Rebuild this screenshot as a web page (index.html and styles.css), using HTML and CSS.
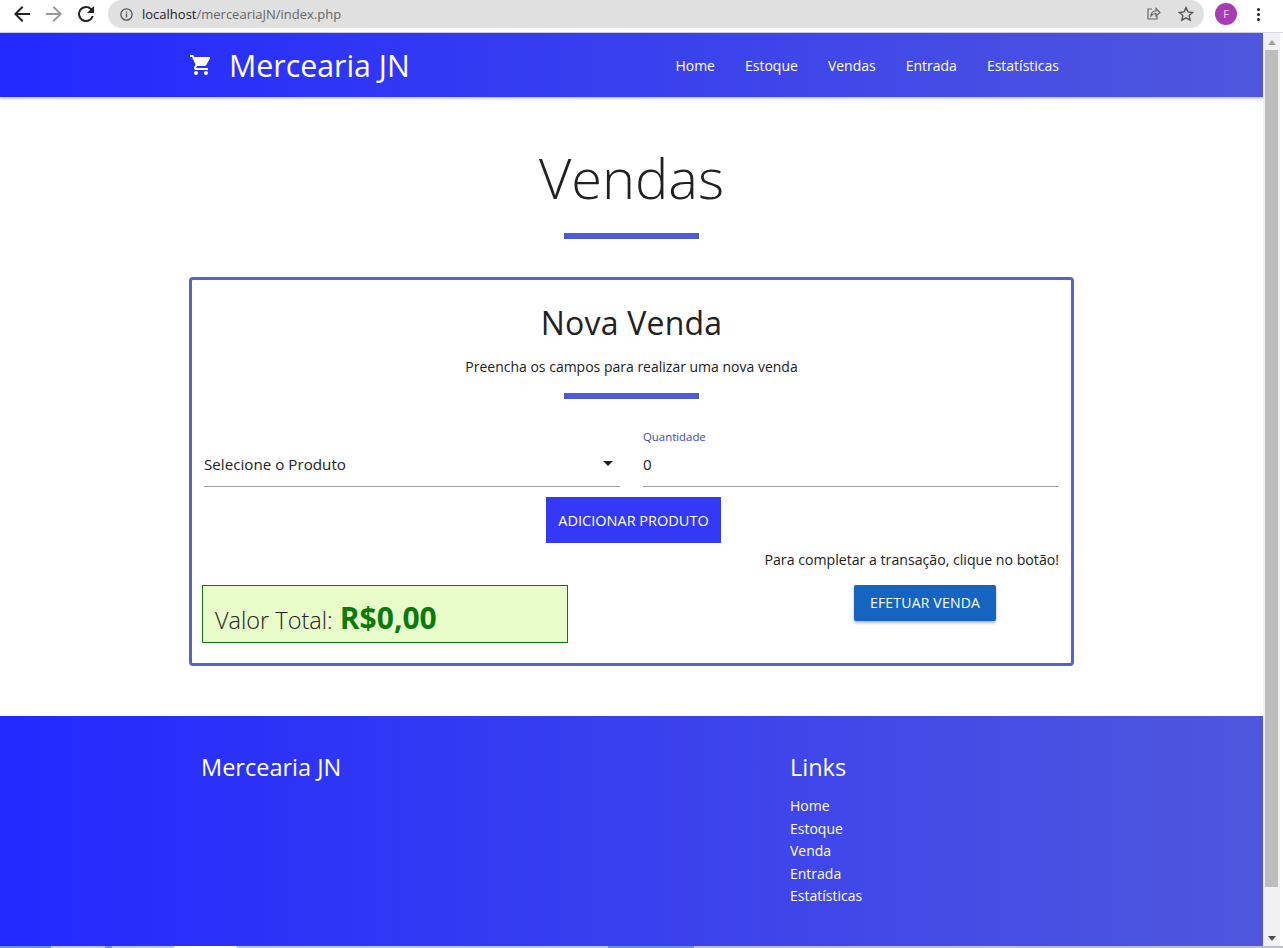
FILE: index.html
```html
<!DOCTYPE html>
<html lang="pt-BR">
<head>
  <meta charset="UTF-8">
  <title>Mercearia JN</title>
  <link rel="stylesheet" href="styles.css">
</head>
<body>

<!-- Browser toolbar -->
<div class="chrome">
  <svg class="tool-icon" viewBox="0 0 24 24"><path d="M20 11H7.8l5.6-5.6L12 4l-8 8 8 8 1.4-1.4L7.8 13H20z" fill="#222"/></svg>
  <svg class="tool-icon" viewBox="0 0 24 24"><path d="M4 11h12.2l-5.6-5.6L12 4l8 8-8 8-1.4-1.4 5.6-5.6H4z" fill="#999"/></svg>
  <svg class="tool-icon" viewBox="0 0 24 24"><path d="M17.65 6.35A7.96 7.96 0 0 0 12 4a8 8 0 1 0 7.73 10h-2.08A6 6 0 1 1 12 6c1.66 0 3.14.69 4.22 1.78L13 11h7V4z" fill="#222"/></svg>
  <div class="omnibox">
    <svg class="info-icon" viewBox="0 0 16 16"><circle cx="8" cy="8" r="6" fill="none" stroke="#555" stroke-width="1.4"/><rect x="7.3" y="7" width="1.4" height="4.2" fill="#555"/><rect x="7.3" y="4.7" width="1.4" height="1.4" fill="#555"/></svg>
    <span class="url"><b>localhost</b>/merceariaJN/index.php</span>
    <svg class="share-icon" viewBox="0 0 16 16"><path d="M7 3H3v10h9v-3M6 10c0-3 2-5 5-5V2.500l4 4-4 3.500V7.500c-2 0-4 .8-5 2.500z" fill="none" stroke="#666" stroke-width="1.2"/></svg>
    <svg class="star-icon" viewBox="0 0 24 24"><path d="M12 3.500l2.600 5.700 6.200.7-4.600 4.200 1.300 6.100L12 17.100l-5.500 3.100 1.300-6.100-4.600-4.200 6.200-.7z" fill="none" stroke="#555" stroke-width="1.900"/></svg>
  </div>
  <div class="avatar">F</div>
  <div class="kebab"><i></i><i></i><i></i></div>
</div>

<div class="view">
  <div class="page">

    <!-- Navigation -->
    <nav class="navbar">
      <div class="nav-inner">
        <a class="brand" href="#">
          <svg class="cart-icon" viewBox="0 0 24 24"><path d="M7 18a2 2 0 1 0 0 4 2 2 0 0 0 0-4zM1 2v2h2l3.600 7.590-1.350 2.450C4.520 15.370 5.480 17 7 17h12v-2H7.420a.25.25 0 0 1-.25-.25l.03-.12L8.100 13h7.450c.75 0 1.410-.41 1.750-1.030l3.580-6.490A1 1 0 0 0 20 4H5.210l-.94-2zm16 16a2 2 0 1 0 0 4 2 2 0 0 0 0-4z" fill="#fff"/></svg>
          Mercearia JN
        </a>
        <div class="nav-links">
          <a href="#">Home</a>
          <a href="#">Estoque</a>
          <a href="#">Vendas</a>
          <a href="#">Entrada</a>
          <a href="#">Estatísticas</a>
        </div>
      </div>
    </nav>

    <!-- Main content -->
    <main class="main">
      <h1 class="page-title">Vendas</h1>
      <div class="title-rule"></div>

      <section class="sale-card">
        <h2 class="sale-title">Nova Venda</h2>
        <p class="sale-sub">Preencha os campos para realizar uma nova venda</p>
        <div class="title-rule small"></div>

        <div class="fields">
          <div class="field">
            <div class="select-value">Selecione o Produto <span class="caret"></span></div>
          </div>
          <div class="field">
            <label class="field-label">Quantidade</label>
            <div class="input-value">0</div>
          </div>
        </div>

        <button class="btn-add">ADICIONAR PRODUTO</button>

        <div class="totals">
          <div class="total-box">Valor Total: <strong>R$0,00</strong></div>
          <div class="finish">
            <p class="finish-text">Para completar a transação, clique no botão!</p>
            <button class="btn-finish">EFETUAR VENDA</button>
          </div>
        </div>
      </section>
    </main>

    <!-- Footer -->
    <footer class="footer">
      <div class="footer-inner">
        <h3 class="footer-brand">Mercearia JN</h3>
        <div class="footer-links">
          <h3>Links</h3>
          <a href="#">Home</a>
          <a href="#">Estoque</a>
          <a href="#">Venda</a>
          <a href="#">Entrada</a>
          <a href="#">Estatísticas</a>
        </div>
      </div>
    </footer>
  </div>

  <!-- Scrollbar -->
  <div class="scrollbar">
    <span class="arrow up"></span>
    <div class="thumb"></div>
    <span class="arrow down"></span>
  </div>
</div>

<div class="taskbar"></div>

</body>
</html>
```

FILE: styles.css
```css
html, body {
  margin: 0;
  padding: 0;
  height: 948px;
  overflow: hidden;
  background: #fff;
}

body {
  font-family: "Open Sans", "Noto Sans", Arial, sans-serif;
  color: #212121;
  display: flex;
  flex-direction: column;
}

a {
  color: white;
  text-decoration: none;
}

/* browser toolbar */
.chrome {
  height: 28px;
  border-bottom: 1px solid #d6d9ea;
  display: flex;
  align-items: center;
  padding: 0 0 4px 10px;
  flex: none;
}

.tool-icon {
  width: 24px;
  height: 24px;
  margin-right: 8px;
}

.omnibox {
  width: 1096px;
  height: 28px;
  margin-left: 2px;
  background: #e0e0e0;
  border-radius: 14px;
  display: flex;
  align-items: center;
  padding: 0 9px 0 11px;
  box-sizing: border-box;
}

.info-icon {
  width: 15px;
  height: 15px;
  margin-right: 8px;
}

.url {
  font-size: 13px;
  color: #666;
  flex: 1;
}

.url b {
  font-weight: normal;
  color: #222;
}

.share-icon {
  width: 16px;
  height: 16px;
  margin-right: 16px;
}

.star-icon {
  width: 18px;
  height: 18px;
  margin-right: 0;
}

.avatar {
  width: 22px;
  height: 22px;
  margin-left: 11px;
  border-radius: 50%;
  background: #a93cb5;
  color: #f5d9f8;
  font-size: 11px;
  text-align: center;
  line-height: 22px;
}

.kebab {
  margin-left: 20px;
  display: flex;
  flex-direction: column;
  gap: 2px;
}

.kebab i {
  width: 3px;
  height: 3px;
  border-radius: 50%;
  background: #222;
}

.view {
  flex: 1;
  display: flex;
  min-height: 0;
}

.page {
  width: 1263px;
  flex: none;
  display: flex;
  flex-direction: column;
}

/* navbar */
.navbar {
  height: 64px;
  background: linear-gradient(90deg, #2229ff, #4f57dd);
  box-shadow: 0 1px 3px rgba(0, 0, 0, 0.35);
  flex: none;
}

.nav-inner {
  width: 885px;
  height: 100%;
  margin: 0 auto;
  display: flex;
  align-items: center;
  justify-content: space-between;
}

.brand {
  font-size: 30.3px;
  display: flex;
  align-items: center;
}

.cart-icon {
  width: 24px;
  height: 24px;
  margin-right: 16px;
}

.nav-links {
  display: flex;
  gap: 30px;
  padding-right: 15px;
  font-size: 14px;
}

/* main */
.main {
  flex: 1;
  padding-top: 45px;
}

.page-title {
  margin: 0;
  text-align: center;
  font-weight: 300;
  font-size: 56px;
  line-height: 70px;
}

.title-rule {
  width: 135px;
  height: 6px;
  margin: 21px auto 0;
  background: #4f5bd5;
}

.title-rule.small {
  margin-top: 16px;
}

.sale-card {
  width: 885px;
  height: 389px;
  margin: 38px auto 0;
  box-sizing: border-box;
  border: 3px solid #5564c9;
  border-radius: 4px;
  padding: 21px 10px 0;
}

.sale-title {
  margin: 0;
  text-align: center;
  font-weight: 400;
  font-size: 32px;
  letter-spacing: 0.2px;
  line-height: 44px;
}

.sale-sub {
  margin: 12px 0 0;
  text-align: center;
  font-size: 14px;
  line-height: 20px;
}

.fields {
  display: flex;
  gap: 23px;
  margin: 25px 2px 0;
}

.field {
  flex: 1;
  height: 62px;
  border-bottom: 1px solid #9e9e9e;
  position: relative;
  display: flex;
  flex-direction: column;
  justify-content: flex-end;
}

.field-label {
  position: absolute;
  top: 5px;
  left: 0;
  font-size: 11.4px;
  color: #3b46b5;
}

.select-value, .input-value {
  font-size: 15.2px;
  line-height: 44px;
}

.caret {
  position: absolute;
  right: 7px;
  bottom: 20px;
  border-left: 5px solid transparent;
  border-right: 5px solid transparent;
  border-top: 5px solid #212121;
}

.btn-add {
  display: block;
  width: 175px;
  height: 46px;
  margin: 10px auto 0 344px;
  border: none;
  background: #3339f4;
  color: white;
  font-family: inherit;
  font-size: 14.5px;
  padding: 0;
}

.totals {
  display: flex;
  justify-content: space-between;
  margin-top: 8px;
}

.total-box {
  width: 366px;
  height: 58px;
  margin-top: 34px;
  box-sizing: border-box;
  border: 1px solid #0a7a0a;
  background: #e8fdc9;
  padding: 11px 12px 0;
  font-size: 23.5px;
  font-weight: 300;
}

.total-box strong {
  margin-left: 1px;
  color: #0a7a0a;
  font-size: 30px;
  font-weight: 700;
}

.finish {
  display: flex;
  flex-direction: column;
  align-items: flex-end;
  padding-right: 2px;
}

.finish-text {
  margin: 0;
  font-size: 14.15px;
  line-height: 18px;
}

.btn-finish {
  width: 142px;
  height: 36px;
  margin: 16px 63px 0 0;
  padding: 0 0 2px;
  border: none;
  border-radius: 2px;
  background: #1565c0;
  color: white;
  font-family: inherit;
  font-size: 14px;
  letter-spacing: 0.2px;
  box-shadow: 0 2px 3px rgba(0, 0, 0, 0.3);
}

/* footer */
.footer {
  height: 230px;
  flex: none;
  background: linear-gradient(90deg, #2229ff, #4f57dd);
  color: white;
}

.footer-inner {
  width: 861px;
  margin: 0 auto;
  padding-top: 34px;
  display: flex;
}

.footer-inner h3 {
  margin: 0;
  font-size: 23.5px;
  font-weight: 400;
  line-height: 34px;
}

.footer-brand {
  width: 589px;
}

.footer-links {
  display: flex;
  flex-direction: column;
  font-size: 14px;
  line-height: 22.500px;
}

.footer-links h3 {
  margin-bottom: 11px;
}

/* scrollbar */
.scrollbar {
  width: 17px;
  margin-right: 3px;
  background: #f1f1f1;
  display: flex;
  flex-direction: column;
  align-items: center;
}

.thumb {
  width: 13px;
  height: 837px;
  flex: none;
  background: #bdbdbd;
}

.arrow {
  flex: none;
  width: 0;
  height: 0;
  margin: 7px 0 5px;
  border-left: 4px solid transparent;
  border-right: 4px solid transparent;
}

.arrow.up {
  border-bottom: 5px solid #a0a0a0;
}

.arrow.down {
  margin-top: auto;
  margin-bottom: 5px;
  border-top: 5px solid #505050;
}

.taskbar {
  height: 2px;
  flex: none;
  background: linear-gradient(90deg,
    #6f93c8 0 51px, #b4c8e4 51px 105px, #6f93c8 105px 112px, #b4c8e4 112px 174px,
    #fff 175px 236px, #b4c8e4 237px 608px, #6f93c8 608px 694px, #bdbdc4 694px);
}
```
